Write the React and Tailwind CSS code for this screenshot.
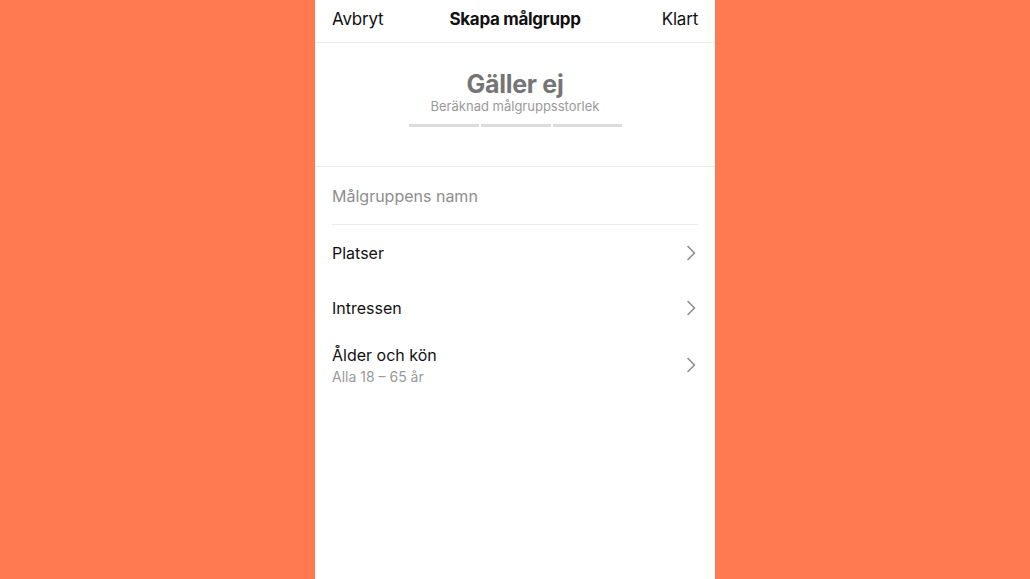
import { useState } from "react";

const rows = [
  { label: "Platser" },
  { label: "Intressen" },
  { label: "Ålder och kön", detail: "Alla 18 – 65 år" },
];

function Chevron() {
  return (
    <svg width="10" height="16" viewBox="0 0 10 16" fill="none" className="shrink-0">
      <path d="M2 1.5 L8.5 8 L2 14.5" stroke="#8a8a8a" strokeWidth="1.5" strokeLinecap="round" strokeLinejoin="round" />
    </svg>
  );
}

export default function App() {
  const [name, setName] = useState("");

  return (
    <div className="flex h-[579px] w-full justify-center bg-[#ff7a50] font-['Inter','Roboto',sans-serif]">
      <div className="flex w-[400px] flex-col bg-white">
        {/* top bar */}
        <div className="grid h-[43px] grid-cols-[1fr_auto_1fr] items-start border-b border-[#ececec] px-[17px] pt-[8px] text-[17px] leading-[22px] text-[#111]">
          <button className="justify-self-start tracking-[-0.2px]">Avbryt</button>
          <span className="font-bold tracking-[-0.3px]">Skapa målgrupp</span>
          <button className="justify-self-end tracking-[-0.2px]">Klart</button>
        </div>

        {/* audience size estimate */}
        <div className="flex h-[124px] flex-col items-center border-b border-[#ececec] pt-[27px]">
          <span className="text-[25px] font-bold leading-[28px] tracking-[-0.3px] text-[#757575]">Gäller ej</span>
          <span className="text-[13px] leading-[16px] text-[#9a9a9a]">Beräknad målgruppsstorlek</span>
          <div className="mt-[10px] flex gap-[2px]">
            <div className="h-[3px] w-[70px] bg-[#dcdcdc]" />
            <div className="h-[3px] w-[70px] bg-[#dcdcdc]" />
            <div className="h-[3px] w-[69px] bg-[#dcdcdc]" />
          </div>
        </div>

        <div className="px-[17px]">
          <div className="flex h-[58px] items-center border-b border-[#ececec]">
            <input
              value={name}
              onChange={(e) => setName(e.target.value)}
              placeholder="Målgruppens namn"
              className="w-full bg-transparent text-[16px] text-[#111] outline-none placeholder:text-[#8e8e8e]"
            />
          </div>

          {rows.map((row) => (
            <div
              key={row.label}
              className={`flex items-center justify-between ${row.detail ? "h-[60px]" : "h-[55px]"}`}
            >
              <div className="flex flex-col">
                <span className="text-[16px] leading-[20px] text-[#111]">{row.label}</span>
                {row.detail && (
                  <span className="mt-[3px] text-[14px] leading-[18px] text-[#9a9a9a]">{row.detail}</span>
                )}
              </div>
              <div className="pr-[2px]">
                <Chevron />
              </div>
            </div>
          ))}
        </div>
      </div>
    </div>
  );
}
